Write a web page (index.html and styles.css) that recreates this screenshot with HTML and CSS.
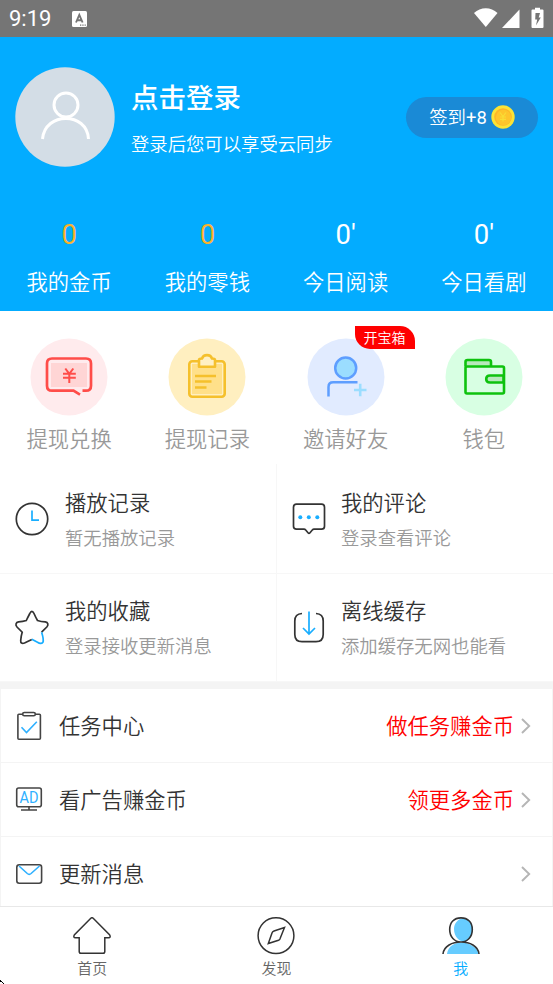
FILE: index.html
```html
<!DOCTYPE html>
<html lang="zh-CN">
<head>
    <meta charset="UTF-8">
    <meta name="viewport" content="width=device-width, initial-scale=1.0">
    <title>我的</title>
    <link rel="stylesheet" href="styles.css">
</head>
<body>

<div class="app">
    <div class="statusbar">
        <span class="time">9:19</span>
        <svg class="status-a" width="15" height="16" viewBox="0 0 15 16">
            <rect width="15" height="16" rx="1.5" fill="#fff"/>
            <path d="M4 11.5L7.3 3.8L10.6 11.5M5.2 9.2h4.2" fill="none" stroke="#757575" stroke-width="1.9"/>
            <path d="M8 14.2h1.3M10.3 14.2h1.3M12.6 14.2h1.2" stroke="#757575" stroke-width="1.2"/>
        </svg>
        <svg class="status-right" width="72" height="22" viewBox="0 0 72 22">
            <path d="M0 6C6.500 -.3 17 -.3 23.500 6L11.800 20Z" fill="#fff"/>
            <path d="M45.500 2.500V21H28Z" fill="#fff"/>
            <path d="M58.500 2.500h2.500v-1.700h5v1.700h2.500q1 0 1 1V20q0 1-1 1h-10q-1 0-1-1V3.500q0-1 1-1z" fill="#fff"/>
            <path d="M61.500 6h4.500l-1.300 4.500h2.100l-4.800 8 1.200-6h-2z" fill="#757575"/>
        </svg>
    </div>

    <div class="header">
        <div class="user">
            <svg class="avatar" width="100" height="100" viewBox="0 0 100 100">
                <circle cx="50" cy="50" r="49.700" fill="#d3dde6"/>
                <g fill="none" stroke="#fff" stroke-width="3">
                    <circle cx="51" cy="38" r="12"/>
                    <path d="M27.500 72C30 44.500 72 44.500 73.500 72"/>
                </g>
            </svg>
            <div class="user-text">
                <div class="login">点击登录</div>
                <div class="login-tip">登录后您可以享受云同步</div>
            </div>
            <div class="sign">
                <span>签到<span class="num">+8</span></span>
                <svg width="24" height="24" viewBox="0 0 24 24">
                    <circle cx="12" cy="12" r="11.700" fill="#fbe336"/>
                    <circle cx="12" cy="12" r="8.800" fill="#fdb528"/>
                    <circle cx="12.500" cy="12.500" r="7.700" fill="#fec52b"/>
                    <path d="M9 7.500l3 4 3-4M12 11.500v5M9 12h6M9 14.300h6" fill="none" stroke="#f9dd35" stroke-width="1.200"/>
                </svg>
            </div>
        </div>
        <div class="stats">
            <div class="stat gold"><b>0</b><span>我的金币</span></div>
            <div class="stat gold"><b>0</b><span>我的零钱</span></div>
            <div class="stat"><b>0'</b><span>今日阅读</span></div>
            <div class="stat"><b>0'</b><span>今日看剧</span></div>
        </div>
    </div>

    <div class="actions">
        <div class="action">
            <svg width="78" height="78" viewBox="0 0 78 78">
                <circle cx="39" cy="39" r="38.500" fill="#ffebed"/>
                <rect x="21" y="25" width="36" height="24" fill="#ffd5d5"/>
                <path d="M52.500 52.700H56q5 0 5-5V25.500q0-5-5-5H22q-5 0-5 5v22.200q0 5 5 5h21.500l6.500 4" fill="none" stroke="#ff4d49" stroke-width="2.700"/>
                <path d="M35.300 30.500l4 5.300 4-5.300M39.300 35.500v9.500M33 35.800h12.800M33 39.700h12.800" fill="none" stroke="#ff4d49" stroke-width="2"/>
            </svg>
            <span>提现兑换</span>
        </div>
        <div class="action">
            <svg width="78" height="78" viewBox="0 0 78 78">
                <circle cx="39" cy="39" r="38.500" fill="#ffefc0"/>
                <rect x="24" y="26" width="30" height="30" fill="#ffe08a"/>
                <rect x="21.300" y="23.300" width="35.400" height="35.400" rx="3" fill="none" stroke="#f5c02c" stroke-width="2.600"/>
                <path d="M31 28.700V22q0-1.500 3-1.500c1.500-4.500 8.500-4.500 10 0q3 0 3 1.500v6.700z" fill="#fff0c4" stroke="#f5c02c" stroke-width="2.600" stroke-linejoin="round"/>
                <path d="M27 38h21M27 43.500h16.500M27 49.500h11.500" stroke="#f5c02c" stroke-width="2.400"/>
            </svg>
            <span>提现记录</span>
        </div>
        <div class="action">
            <svg width="78" height="78" viewBox="0 0 78 78">
                <circle cx="39" cy="39" r="38.500" fill="#e1ebff"/>
                <circle cx="38.700" cy="30" r="10.500" fill="#9bddff" stroke="#5e9eff" stroke-width="2.500"/>
                <path d="M21.500 58.500V49q0-4.700 4.700-4.700h24.300" fill="none" stroke="#5e9eff" stroke-width="2.500"/>
                <path d="M47 52h12.500M53.200 45.800v12.500" stroke="#9bddff" stroke-width="2.600"/>
            </svg>
            <span>邀请好友</span>
            <i class="badge">开宝箱</i>
        </div>
        <div class="action">
            <svg width="78" height="78" viewBox="0 0 78 78">
                <circle cx="39" cy="39" r="38.500" fill="#d8ffe3"/>
                <path d="M20.500 28.500V24q0-2 2-2H44q2 0 2 2v4.500" fill="#b8e8bc" stroke="#0ec20e" stroke-width="2.600"/>
                <rect x="20.500" y="28.500" width="38.500" height="27" rx="1.500" fill="#d8ffe3" stroke="#0ec20e" stroke-width="2.600"/>
                <path d="M58.500 37.500H45q-3.800 0-3.800 3.500t3.800 3.500h13.500z" fill="#b8e8bc" stroke="#0ec20e" stroke-width="2.600"/>
            </svg>
            <span>钱包</span>
        </div>
    </div>

    <div class="grid">
        <div class="cell">
            <svg width="36" height="36" viewBox="0 0 36 36" fill="none" stroke="#333" stroke-width="1.700">
                <circle cx="18" cy="18" r="15.700"/>
                <path d="M18 9.500v9.700h7" stroke="#19aeff"/>
            </svg>
            <div>
                <h3>播放记录</h3>
                <p>暂无播放记录</p>
            </div>
        </div>
        <div class="cell">
            <svg width="36" height="36" viewBox="0 0 36 36" fill="none" stroke="#333" stroke-width="1.700">
                <path d="M5.500 3.200h25q3 0 3 3v19q0 3-3 3H23q-1 0-1.700.8l-2.500 3q-.8.800-1.600 0l-2.500-3q-.7-.8-1.700-.8H5.500q-3 0-3-3v-19q0-3 3-3z"/>
                <g fill="#19aeff" stroke="none"><circle cx="9.300" cy="16.200" r="2"/><circle cx="17.800" cy="16.200" r="2"/><circle cx="26.300" cy="16.200" r="2"/></g>
            </svg>
            <div>
                <h3>我的评论</h3>
                <p>登录查看评论</p>
            </div>
        </div>
        <div class="cell">
            <svg width="36" height="36" viewBox="0 0 36 36" fill="none" stroke="#333" stroke-width="1.700">
                <path d="M17.800 30.500L10.500 34C8 35 6.500 34 6.700 31.500Q7 27 8.200 23.200L3 18C1 15.500 2 13.400 4.500 12.900Q9 12.600 12.300 11.500Q14 8 15.800 4.500C17 1.600 18.800 1.600 20 4.500Q21.500 8 23.500 11.500Q27 12.600 31.300 12.900C34 13.400 34.800 15.500 32.800 18L27.600 23.200"/>
                <path d="M27.600 23.200q2.300 7 1.400 10c-1 2.200-3.800 1-5.500 0l-5.700-2.900" stroke="#19aeff"/>
            </svg>
            <div>
                <h3>我的收藏</h3>
                <p>登录接收更新消息</p>
            </div>
        </div>
        <div class="cell">
            <svg width="36" height="36" viewBox="0 0 36 36" fill="none" stroke="#333" stroke-width="1.700">
                <path d="M11 4.500Q3.800 4.800 3.800 12v13.500q0 7.200 7.200 7.200h14q7.200 0 7.200-7.200V12q0-7.200-7.200-7.500"/>
                <path d="M18 2.500v22.500M12 19l6 6 6-6" stroke="#19aeff"/>
            </svg>
            <div>
                <h3>离线缓存</h3>
                <p>添加缓存无网也能看</p>
            </div>
        </div>
    </div>

    <div class="list">
        <div class="row">
            <svg width="28" height="30" viewBox="0 0 28 30" fill="none" stroke="#444" stroke-width="1.600">
                <rect x="2.900" y="3.200" width="22.500" height="25" rx="1"/>
                <rect x="7.700" y="1.500" width="12.600" height="3.300" rx="1.600" fill="#fff"/>
                <path d="M6.500 16.200l5 5.300 10.300-10.800" stroke="#2eb0ff"/>
            </svg>
            <span class="name">任务中心</span>
            <span class="hint">做任务赚金币</span>
            <svg class="arrow" width="10" height="16" viewBox="0 0 10 16"><path d="M1 1l7.200 7L1 15" fill="none" stroke="#b5b5b5" stroke-width="1.900"/></svg>
        </div>
        <div class="row">
            <svg width="28" height="30" viewBox="0 0 28 30" fill="none" stroke="#444" stroke-width="1.600">
                <rect x="1.700" y="3" width="24.600" height="18.700" rx="2"/>
                <path d="M14 21.500v3.200M6 25h16"/>
                <text class="ad" x="14" y="18.200" text-anchor="middle" textLength="19" lengthAdjust="spacingAndGlyphs">AD</text>
            </svg>
            <span class="name">看广告赚金币</span>
            <span class="hint">领更多金币</span>
            <svg class="arrow" width="10" height="16" viewBox="0 0 10 16"><path d="M1 1l7.200 7L1 15" fill="none" stroke="#b5b5b5" stroke-width="1.900"/></svg>
        </div>
        <div class="row">
            <svg width="28" height="30" viewBox="0 0 28 30" fill="none" stroke="#444" stroke-width="1.600">
                <rect x="1.800" y="5.800" width="24.800" height="18.500" rx="2.500"/>
                <path d="M4 7l8.300 7.500q1.900 1.600 3.800 0L24.500 7" stroke="#2eb0ff"/>
            </svg>
            <span class="name">更新消息</span>
            <svg class="arrow" width="10" height="16" viewBox="0 0 10 16"><path d="M1 1l7.200 7L1 15" fill="none" stroke="#b5b5b5" stroke-width="1.900"/></svg>
        </div>
    </div>

    <div class="tabbar">
        <div class="tab">
            <svg width="38" height="38" viewBox="0 0 38 38" fill="none" stroke="#333" stroke-width="1.500">
                <path d="M17.800 1.300L1.500 17.700Q-.2 20.700 2.500 20.700H6.200V34.500Q6.200 36.300 8 36.300H30Q31.800 36.300 31.800 34.500V20.700H35.500Q38.200 20.700 36.500 17.700L20.200 1.300Q19 .2 17.800 1.300z"/>
            </svg>
            <span>首页</span>
        </div>
        <div class="tab">
            <svg width="38" height="38" viewBox="0 0 38 38" fill="none" stroke="#333" stroke-width="1.500">
                <circle cx="19" cy="18.700" r="17.900"/>
                <path d="M27.500 10.500L23 21.800Q22.500 22.800 21.500 23.200L11.300 26.500L15 16Q15.500 14.500 17 14z"/>
            </svg>
            <span>发现</span>
        </div>
        <div class="tab active">
            <svg width="38" height="38" viewBox="0 0 38 38" fill="none">
                <path d="M21.500 1.500c6 0 9 5 9 10.500 0 8-4 12.500-8.500 12.500s-10-4.500-10-12.500c0-5.500 4-10.500 9.500-10.500zM5 37c1-8 8-11.500 14.500-11.500S36 30 36.500 37z" fill="#66ccff"/>
                <path d="M19 .9c7 0 11.300 4.500 11.300 11.600 0 7.500-4.800 12.500-11.300 12.500S7.700 20 7.700 12.500C7.700 5.400 12 .9 19 .9zM1 37C2.500 21 35.500 21 37 37" stroke="#333" stroke-width="1.600"/>
            </svg>
            <span>我</span>
        </div>
    </div>
    <svg class="corner" width="4" height="4" viewBox="0 0 4 4"><path d="M0 0h1v1h1v1H0zM2 2h1v1h1v1H3V3H2z"/></svg>
</div>

</body>
</html>
```
FILE: styles.css
```css
* {
    box-sizing: border-box;
    margin: 0;
    padding: 0;
}
body {
    font-family: "Noto Sans CJK SC", sans-serif;
    font-weight: 350;
    background: #fff;
    color: #333;
}
svg {
    display: block;
    flex-shrink: 0;
}
.app {
    position: relative;
    display: flex;
    flex-direction: column;
    height: 984px;
    overflow: hidden;
}

/* system bar */
.statusbar {
    display: flex;
    align-items: center;
    height: 37px;
    padding: 0 9px;
    background: #757575;
    color: #fff;
}
.time {
    width: 63px;
    font: 450 22px/36px Roboto, sans-serif;
    padding-top: 1px;
}
.status-right {
    margin: 0 -2px 2px auto;
}

/* header */
.header {
    height: 274px;
    background: #03acff;
    color: #fff;
}
.user {
    display: flex;
    align-items: center;
    height: 160px;
    padding: 0 15px;
}
.user-text {
    flex: 1;
    padding: 0 0 2px 16px;
}
.login {
    font-size: 27.500px;
    font-weight: 500;
    line-height: 40px;
}
.login-tip {
    padding-top: 13px;
    font-size: 18.350px;
    line-height: 28px;
}
.sign {
    display: flex;
    align-items: center;
    justify-content: center;
    gap: 4px;
    width: 132px;
    height: 41px;
    border-radius: 21px;
    background: #1a8ad6;
    font-size: 18.400px;
    line-height: 28px;
}
.num {
    font-family: Roboto, sans-serif;
    font-weight: 400;
}
.stats {
    display: flex;
    padding-top: 19px;
}
.stat {
    flex: 1;
    display: flex;
    flex-direction: column;
    align-items: center;
}
.stat b {
    font: 400 27.500px/38px Roboto, sans-serif;
}
.stat span {
    padding-top: 11px;
    font-size: 21.300px;
    line-height: 32px;
}
.gold b {
    color: #fcb22c;
}

/* shortcuts */
.actions {
    display: flex;
    height: 153px;
    padding-top: 27px;
}
.action {
    position: relative;
    flex: 1;
    display: flex;
    flex-direction: column;
    align-items: center;
    color: #999;
    font-size: 21.300px;
    line-height: 32px;
}
.action span {
    padding-top: 6px;
}
.badge {
    position: absolute;
    top: -12px;
    left: 78px;
    width: 60px;
    height: 23px;
    border-radius: 0 15px 0 15px;
    background: #f00;
    color: #fff;
    font-size: 14px;
    font-style: normal;
    line-height: 22px;
    text-align: center;
}

/* records */
.grid {
    display: grid;
    grid-template-columns: 277px 276px;
    grid-template-rows: 110px 108px;
    border-bottom: 7px solid #f4f4f4;
    height: 225px;
}
.cell {
    display: flex;
    align-items: center;
    gap: 15px;
    padding-left: 14px;
    border-bottom: 1px solid #f7f7f7;
}
.cell:nth-child(odd) {
    border-right: 1px solid #f7f7f7;
}
.cell:nth-child(even) {
    gap: 14px;
}
.cell:nth-child(n+3) {
    padding-bottom: 2px;
}
.cell h3 {
    font-size: 21.300px;
    font-weight: 350;
    line-height: 34px;
}
.cell p {
    padding-top: 2px;
    color: #999;
    font-size: 18.350px;
    line-height: 32px;
}

/* menu list */
.list {
    height: 217px;
    overflow: hidden;
    border: solid #f4f4f4;
    border-width: 0 1px;
}
.row {
    display: flex;
    align-items: center;
    height: 74px;
    padding: 0 21px 0 14px;
    border-bottom: 1px solid #f4f4f4;
    font-size: 21.300px;
    line-height: 32px;
}
.row span {
    padding-bottom: 2px;
}
.name {
    margin-left: 16px;
}
.hint {
    margin-left: auto;
    color: #f00;
}
.arrow {
    margin-left: 7px;
}
.name + .arrow {
    margin-left: auto;
}
.ad {
    fill: #2eb0ff;
    stroke: none;
    font: 450 16px Roboto, sans-serif;
}

/* bottom tabs */
.tabbar {
    display: flex;
    height: 78px;
    padding-top: 10px;
    border-top: 1px solid #e8e8e8;
    background: #fff;
}
.tab {
    flex: 1;
    display: flex;
    flex-direction: column;
    align-items: center;
    color: #666;
    font-size: 14.900px;
    line-height: 26px;
}
.active {
    color: #03acff;
}
.corner {
    position: absolute;
    left: 0;
    bottom: 0;
}
```
